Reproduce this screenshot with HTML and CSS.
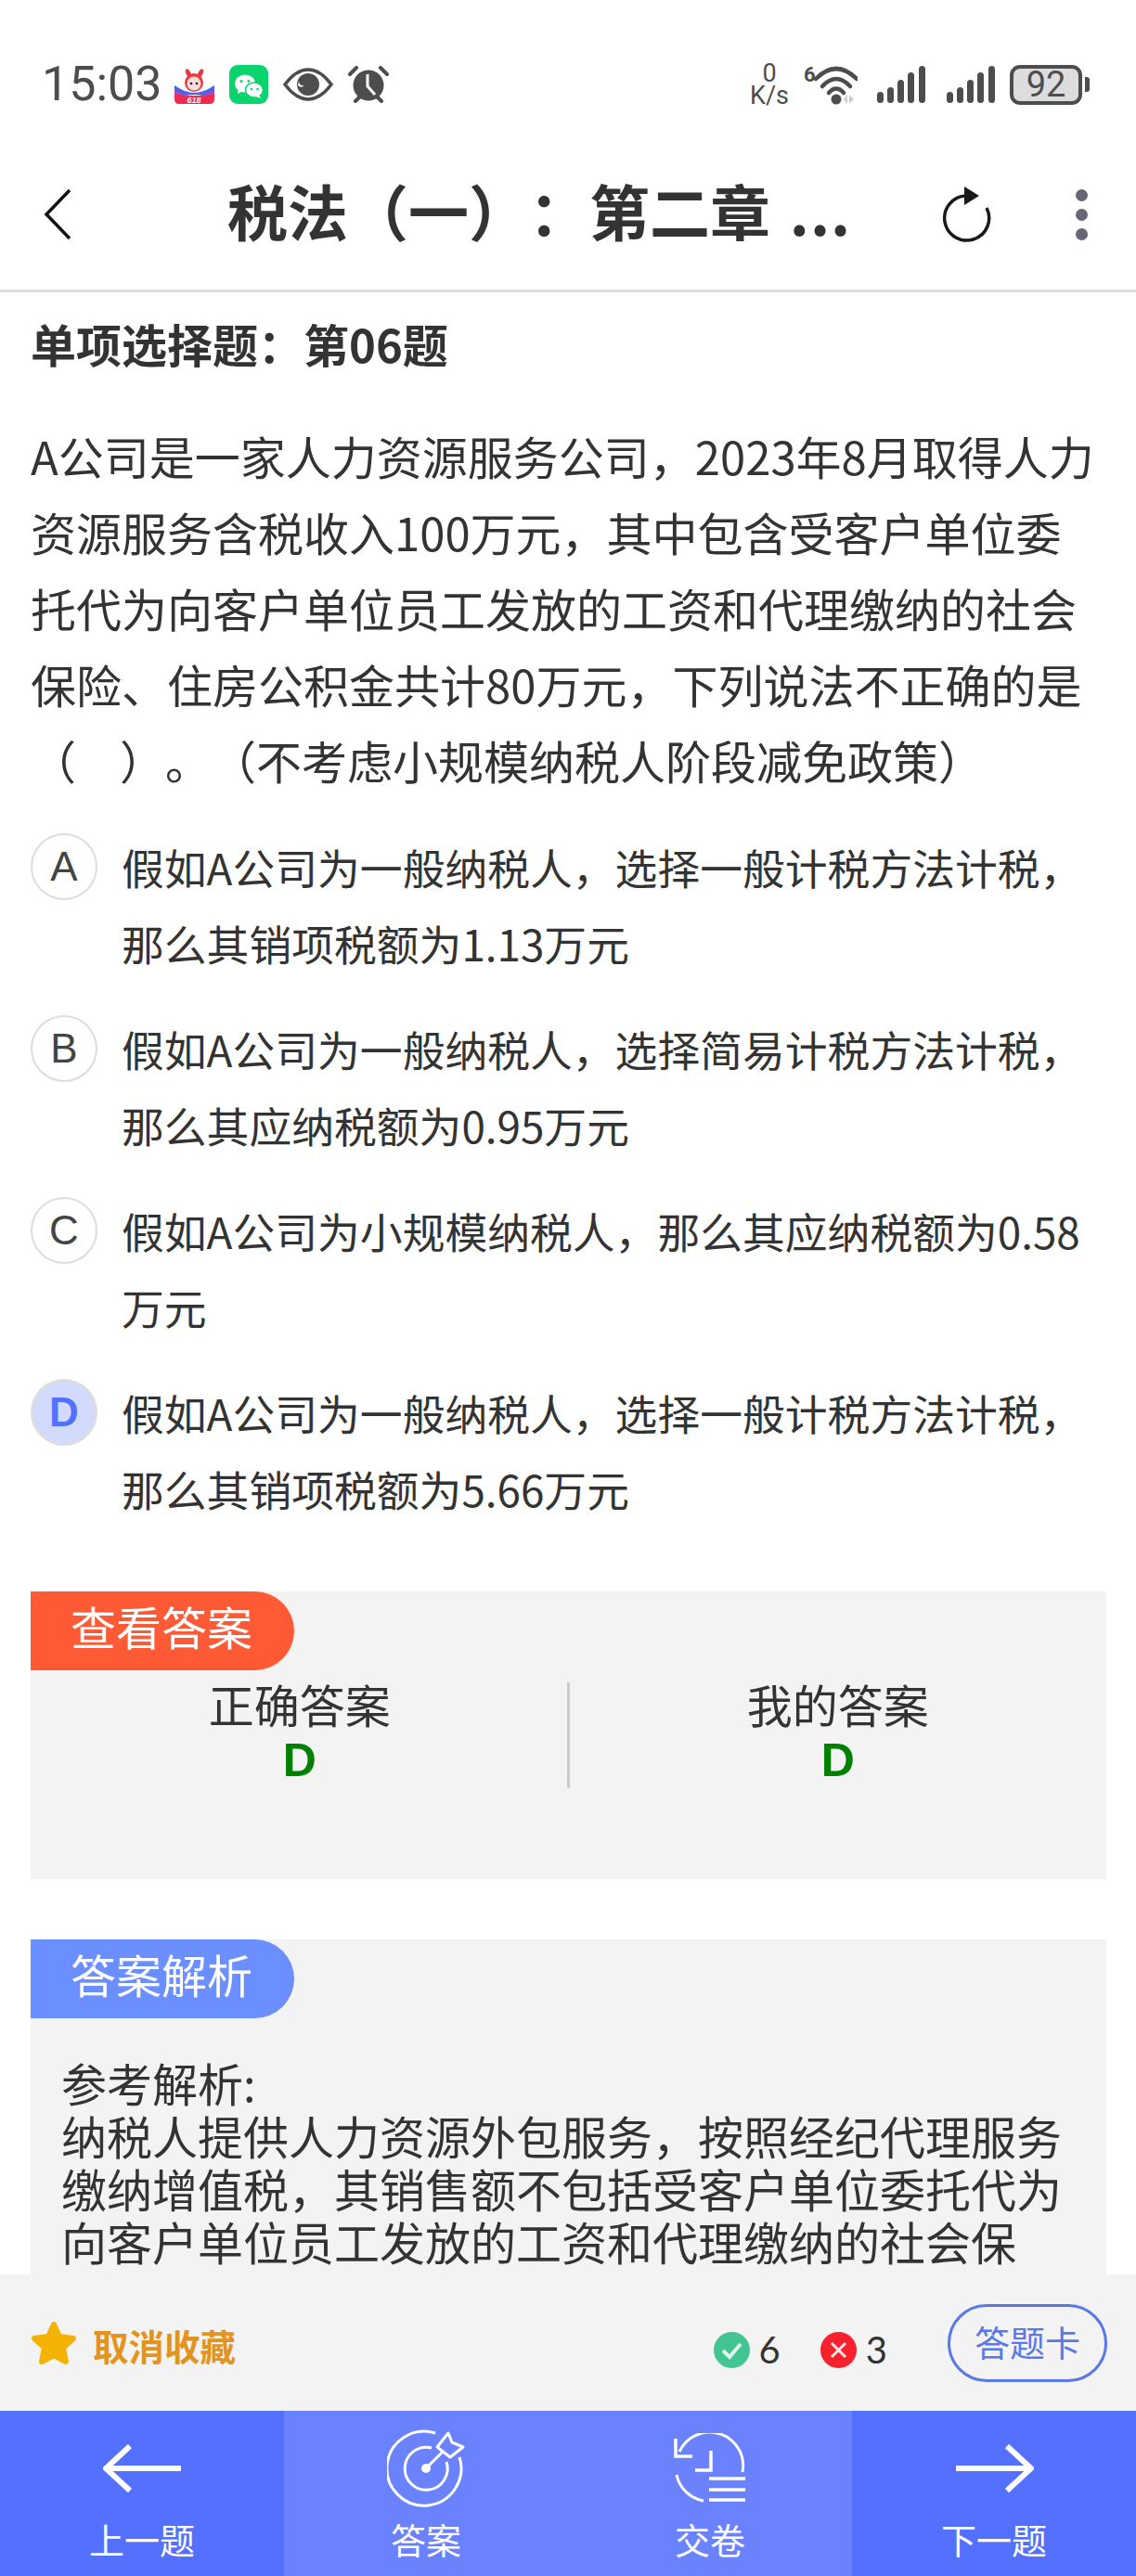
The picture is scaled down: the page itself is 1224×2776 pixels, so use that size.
FILE: index.html
```html
<!DOCTYPE html>
<html lang="zh-CN">
<head>
  <meta charset="UTF-8">
  <meta name="viewport" content="width=device-width, initial-scale=1">
  <title>税法（一）：第二章</title>
  <link rel="stylesheet" href="styles.css">
</head>
<body>
<div class="phone">
  <!-- status bar -->
  <div class="status">
    <div class="status-left">
      <span class="time">15:03</span>
      <svg class="ic-promo" viewBox="0 0 43 38">
        <path d="M0 18 Q12 26 21 26 Q31 26 43 18 V28 H0Z" fill="#4b63e0"/>
        <path d="M0 23 Q12 29 21 29 Q31 29 43 23 V30 H0Z" fill="#9a4fd0"/>
        <path d="M0 27 Q12 30 21 30 Q31 30 43 27 V33 Q43 38 38 38 H5 Q0 38 0 33Z" fill="#ee2b50"/>
        <ellipse cx="15" cy="5" rx="2.500" ry="5" fill="#e8393f" transform="rotate(-25 15 5)"/>
        <ellipse cx="28" cy="5" rx="2.500" ry="5" fill="#e8393f" transform="rotate(25 28 5)"/>
        <circle cx="21" cy="15" r="10" fill="#e8393f"/>
        <circle cx="21" cy="16" r="7.500" fill="#fbdcdc"/>
        <circle cx="18" cy="16" r="1.300" fill="#222"/>
        <circle cx="24" cy="16" r="1.300" fill="#222"/>
        <text class="promo-num" x="21" y="37" text-anchor="middle">618</text>
      </svg>
      <svg class="ic-wechat" viewBox="0 0 42 42">
        <rect width="42" height="42" rx="9" fill="#0bd46e"/>
        <ellipse cx="17" cy="20" rx="11" ry="9.500" fill="#fff"/>
        <path d="M10 26 L9 31 L15 28Z" fill="#fff"/>
        <ellipse cx="27" cy="27" rx="9.500" ry="8" fill="#fff" stroke="#0bd46e" stroke-width="1.500"/>
        <path d="M32 32 L34 36 L28 34Z" fill="#fff"/>
        <circle cx="13" cy="17.500" r="1.500" fill="#0bd46e"/>
        <circle cx="21" cy="17.500" r="1.500" fill="#0bd46e"/>
        <circle cx="24" cy="26" r="1.300" fill="#0bd46e"/>
        <circle cx="30.500" cy="26" r="1.300" fill="#0bd46e"/>
      </svg>
      <svg class="ic-eye" viewBox="0 0 54 36">
        <path d="M2 18 Q14 2 27 2 Q40 2 52 18 Q40 34 27 34 Q14 34 2 18Z" fill="none" stroke="#4d4d4d" stroke-width="3.500"/>
        <circle cx="27" cy="18" r="12" fill="#4d4d4d"/>
        <path d="M16 19 A4.500 4.500 0 0 0 23 19 A4.500 4.500 0 0 1 17 14Z" fill="#fff"/>
      </svg>
      <svg class="ic-alarm" viewBox="0 0 44 40">
        <circle cx="22" cy="21" r="16.500" fill="#4d4d4d"/>
        <path d="M21 9 V22 L29 31" fill="none" stroke="#fff" stroke-width="3"/>
        <path d="M2 9 L9 2 M35 2 L42 9" stroke="#4d4d4d" stroke-width="4" stroke-linecap="round"/>
        <path d="M8 38 L12 34 M36 38 L32 34" stroke="#4d4d4d" stroke-width="4" stroke-linecap="round"/>
      </svg>
    </div>
    <div class="status-right">
      <div class="netspeed"><span>0</span><span>K/s</span></div>
      <svg class="ic-wifi" viewBox="0 0 58 44">
        <text class="wifi-num" x="0" y="19">6</text>
        <path d="M13 16 Q35 -6 57 16" fill="none" stroke="#4d4d4d" stroke-width="4.500" stroke-linecap="round"/>
        <path d="M20 24 Q35 8 50 24" fill="none" stroke="#4d4d4d" stroke-width="4.500" stroke-linecap="round"/>
        <path d="M27 31 Q35 22 43 31" fill="none" stroke="#4d4d4d" stroke-width="4.500" stroke-linecap="round"/>
        <circle cx="35" cy="38" r="5.500" fill="#4d4d4d"/>
        <path d="M43 38 L47 33 V43Z M49 33 L54 38 L49 43Z" fill="#ccc"/>
      </svg>
      <svg class="ic-signal" viewBox="0 0 52 40">
        <rect x="0" y="28" width="7" height="12" rx="3.500"/>
        <rect x="11" y="23" width="7" height="17" rx="3.500"/>
        <rect x="22" y="15" width="7" height="25" rx="3.500"/>
        <rect x="33" y="7" width="7" height="33" rx="3.500"/>
        <rect x="45" y="0" width="7" height="40" rx="3.500"/>
      </svg>
      <svg class="ic-signal second" viewBox="0 0 52 40">
        <rect x="0" y="28" width="7" height="12" rx="3.500"/>
        <rect x="11" y="23" width="7" height="17" rx="3.500"/>
        <rect x="22" y="15" width="7" height="25" rx="3.500"/>
        <rect x="33" y="7" width="7" height="33" rx="3.500"/>
        <rect x="45" y="0" width="7" height="40" rx="3.500"/>
      </svg>
      <div class="battery"><span class="battery-body">92</span><span class="battery-tip"></span></div>
    </div>
  </div>

  <!-- title bar -->
  <header class="toolbar">
    <svg class="ic-back" viewBox="0 0 30 56"><path d="M28 2 L3 28 L28 54" fill="none" stroke="#111" stroke-width="3.500"/></svg>
    <h1 class="page-title">税法（一）：第二章 <span class="dots">...</span></h1>
    <svg class="ic-refresh" viewBox="0 0 56 60">
      <path d="M28 10 A24 24 0 1 0 50 23" fill="none" stroke="#1a1a1a" stroke-width="3.500"/>
      <path d="M26 0 L42 10 L26 20Z" fill="#1a1a1a"/>
    </svg>
    <div class="more"><i></i><i></i><i></i></div>
  </header>

  <main class="content">
    <h2 class="q-type">单项选择题：第06题</h2>
    <p class="q-text">A公司是一家人力资源服务公司，2023年8月取得人力资源服务含税收入100万元，其中包含受客户单位委托代为向客户单位员工发放的工资和代理缴纳的社会保险、住房公积金共计80万元，下列说法不正确的是（&nbsp;&nbsp;&nbsp;&nbsp;&#8202;）。（不考虑小规模纳税人阶段减免政策）</p>

    <ul class="options">
      <li class="option"><span class="letter">A</span><span class="opt-text">假如A公司为一般纳税人，选择一般计税方法计税，那么其销项税额为1.13万元</span></li>
      <li class="option"><span class="letter">B</span><span class="opt-text">假如A公司为一般纳税人，选择简易计税方法计税，那么其应纳税额为0.95万元</span></li>
      <li class="option"><span class="letter">C</span><span class="opt-text">假如A公司为小规模纳税人，那么其应纳税额为0.58万元</span></li>
      <li class="option selected"><span class="letter">D</span><span class="opt-text">假如A公司为一般纳税人，选择一般计税方法计税，那么其销项税额为5.66万元</span></li>
    </ul>

    <section class="panel answer">
      <div class="tag tag-red">查看答案</div>
      <div class="answer-cols">
        <div class="answer-col"><span>正确答案</span><b>D</b></div>
        <div class="answer-col"><span>我的答案</span><b>D</b></div>
      </div>
    </section>

    <section class="panel analysis">
      <div class="tag tag-blue">答案解析</div>
      <p class="analysis-text">参考解析:<br>纳税人提供人力资源外包服务，按照经纪代理服务<br>缴纳增值税，其销售额不包括受客户单位委托代为<br>向客户单位员工发放的工资和代理缴纳的社会保</p>
    </section>
  </main>

  <div class="actions">
    <div class="fav">
      <svg class="ic-star" viewBox="0 0 50 48"><path d="M25 4 L31 17 L46 19 L35 29 L38 44 L25 37 L12 44 L15 29 L4 19 L19 17Z" fill="#f5b301" stroke="#f5b301" stroke-width="6" stroke-linejoin="round"/></svg>
      <span>取消收藏</span>
    </div>
    <div class="score">
      <svg class="ic-mark" viewBox="0 0 39 39"><circle cx="19.500" cy="19.500" r="19.500" fill="#43c591"/><path d="M10 20 L17 27 L29 13" fill="none" stroke="#dff7ec" stroke-width="4"/></svg>
      <span>6</span>
      <svg class="ic-mark wrong" viewBox="0 0 39 39"><circle cx="19.500" cy="19.500" r="19.500" fill="#f5222d"/><path d="M12 12 L27 27 M27 12 L12 27" stroke="#fde3e3" stroke-width="3"/></svg>
      <span>3</span>
    </div>
    <div class="card-btn">答题卡</div>
  </div>

  <nav class="tabs">
    <div class="tab">
      <span class="tab-icon"><svg class="ic-arrow" viewBox="0 0 85 52"><path d="M84 26 H3 M29 2 L3 26 L29 50" fill="none" stroke="#fff" stroke-width="6"/></svg></span>
      <span class="tab-label">上一题</span>
    </div>
    <div class="tab light">
      <span class="tab-icon"><svg class="ic-target" viewBox="0 0 84 84">
        <path d="M52 4 A40 40 0 1 0 78 30" fill="none" stroke="#fff" stroke-width="3"/>
        <path d="M48 20 A23 23 0 1 0 64 35" fill="none" stroke="#fff" stroke-width="3"/>
        <circle cx="42" cy="42" r="5" fill="#fff"/>
        <path d="M42 42 L60 24" stroke="#fff" stroke-width="3"/>
        <path d="M66 4 L70 14 L82 19 L68 30 L54 19Z" fill="none" stroke="#fff" stroke-width="3" stroke-linejoin="round"/>
      </svg></span>
      <span class="tab-label">答案</span>
    </div>
    <div class="tab light">
      <span class="tab-icon"><svg class="ic-submit" viewBox="0 0 78 76">
        <path d="M6 20 A36 36 0 0 1 74 42" fill="none" stroke="#fff" stroke-width="3"/>
        <path d="M2 6 V25 H20" fill="none" stroke="#fff" stroke-width="3.500"/>
        <path d="M40 19 V40 H23" fill="none" stroke="#fff" stroke-width="3.500"/>
        <path d="M3 45 A36 36 0 0 0 32 73" fill="none" stroke="#fff" stroke-width="3"/>
        <path d="M38 49 H77 M38 61 H77 M38 72 H77" stroke="#fff" stroke-width="3.500"/>
      </svg></span>
      <span class="tab-label">交卷</span>
    </div>
    <div class="tab">
      <span class="tab-icon"><svg class="ic-arrow" viewBox="0 0 85 52"><path d="M1 26 H82 M56 2 L82 26 L56 50" fill="none" stroke="#fff" stroke-width="6"/></svg></span>
      <span class="tab-label">下一题</span>
    </div>
  </nav>
</div>
</body>
</html>
```

FILE: styles.css
```css
:root {
  --text: #333;
  --status: #4d4d4d;
  --panel: #f3f3f3;
  --blue: #5470ff;
  --blue-light: #6b82ff;
  --line: #ddd;
}
* { box-sizing: border-box; margin: 0; padding: 0; }
html, body { height: 100%; }
body {
  font-family: "Noto Sans CJK SC", "Noto Sans", sans-serif;
  color: var(--text);
  background: #fff;
  overflow: hidden;
  text-spacing-trim: space-all;
}
.phone { display: flex; flex-direction: column; height: 100vh; }

/* status bar */
.status {
  height: 150px;
  padding: 32px 50px 0 45px;
  display: flex;
  align-items: center;
  justify-content: space-between;
  flex: none;
  color: var(--status);
}
.status-left, .status-right { display: flex; align-items: center; }
.status-left { gap: 16px; }
.time { font-family: Roboto, sans-serif; font-size: 52px; line-height: 60px; margin-right: -3px; }
.ic-promo { width: 43px; height: 38px; margin-top: 3px; }
.promo-num { font: italic 700 9px "Liberation Sans", sans-serif; fill: #fff; }
.ic-wechat { width: 42px; height: 42px; }
.ic-eye { width: 54px; height: 36px; }
.ic-alarm { width: 44px; height: 40px; }
.netspeed {
  display: flex;
  flex-direction: column;
  align-items: center;
  font-family: Roboto, sans-serif;
  font-size: 27px;
  line-height: 24px;
  width: 42px;
}
.ic-wifi { width: 58px; height: 44px; margin-left: 16px; }
.wifi-num { font: 700 22px Roboto, sans-serif; fill: var(--status); }
.ic-signal { width: 52px; height: 40px; margin-left: 21px; fill: var(--status); }
.ic-signal.second { margin-left: 23px; }
.battery { display: flex; align-items: center; margin-left: 16px; }
.battery-body {
  width: 78px;
  height: 43px;
  border: 4px solid var(--status);
  border-radius: 11px;
  background: #ddd;
  font-family: Roboto, sans-serif;
  font-size: 38px;
  line-height: 35px;
  text-align: center;
}
.battery-tip { width: 5px; height: 16px; margin-left: 3px; background: var(--status); border-radius: 0 3px 3px 0; }

/* title bar */
.toolbar {
  height: 165px;
  flex: none;
  display: flex;
  align-items: center;
  padding-left: 47px;
  border-bottom: 3px solid var(--line);
}
.ic-back { width: 30px; height: 56px; }
.page-title {
  margin-left: 168px;
  font-size: 65px;
  line-height: 80px;
  font-weight: 700;
  white-space: nowrap;
  margin-top: -10px;
}
.dots { margin-left: 6px; letter-spacing: 1px; }
.ic-refresh { width: 56px; height: 60px; margin-left: auto; }
.more { display: flex; flex-direction: column; gap: 8px; margin: 0 52px 0 90px; }
.more i { width: 13px; height: 13px; border-radius: 50%; background: #666677; }

/* scrolling area */
.content { flex: 1; min-height: 0; overflow: hidden; padding: 25px 32px 0 33px; }
.q-type { font-size: 49px; line-height: 60px; font-weight: 700; }
.q-text { margin-top: 50px; font-size: 49px; line-height: 82px; }
.options { list-style: none; margin-top: 33px; }
.option { display: flex; gap: 26px; margin-bottom: 32px; }
.letter {
  flex: none;
  width: 72px;
  height: 72px;
  margin-top: 5px;
  border: 2px solid var(--line);
  border-radius: 50%;
  font-family: "Liberation Sans", sans-serif;
  font-size: 44px;
  line-height: 68px;
  text-align: center;
  color: #444;
}
.opt-text { font-size: 45.8px; line-height: 82px; }
.selected .letter {
  background: #d2dbff;
  border: 3px solid #ddd;
  color: var(--blue);
  font-weight: 700;
  line-height: 66px;
}

.panel { background: var(--panel); }
.answer { height: 310px; margin-top: 70px; }
.analysis { margin-top: 65px; padding-bottom: 40px; }
.tag {
  width: 284px;
  height: 85px;
  padding-left: 43px;
  border-radius: 0 43px 43px 0;
  color: #fff;
  font-size: 49px;
  line-height: 73px;
}
.tag-red { background: #ff5a36; }
.tag-blue { background: #6c8fff; }
.answer-cols { display: grid; grid-template-columns: 1fr 1fr; margin-top: 13px; height: 114px; }
.answer-col { display: flex; flex-direction: column; align-items: center; }
.answer-col + .answer-col { border-left: 3px solid #ccc; margin-left: -2px; }
.answer-col span { font-size: 49px; line-height: 55px; margin-top: -5px; }
.answer-col b {
  font-family: "Liberation Sans", sans-serif;
  font-size: 50px;
  line-height: 59px;
  margin-top: 5px;
  color: #008000;
}
.analysis-text { margin-top: 40px; padding: 0 33px; font-size: 49px; line-height: 57px; white-space: nowrap; }

/* favourite / score row */
.actions {
  height: 147px;
  flex: none;
  display: flex;
  align-items: center;
  padding: 0 31px 0 33px;
  background: var(--panel);
}
.fav { display: flex; align-items: center; gap: 17px; }
.ic-star { width: 50px; height: 48px; }
.fav span { font-size: 38.5px; line-height: 48px; font-weight: 700; color: #e39321; margin-top: 4px; }
.score { display: flex; align-items: center; gap: 10px; margin: 15px 0 0 auto; }
.score span { font-family: Lato, sans-serif; font-size: 40px; line-height: 48px; color: #333; }
.ic-mark { width: 39px; height: 39px; }
.ic-mark.wrong { margin-left: 33px; }
.card-btn {
  width: 172px;
  height: 84px;
  margin-left: 65px;
  border: 3px solid #5a78e6;
  border-radius: 42px;
  color: #5a78e6;
  font-size: 38px;
  line-height: 74px;
  text-align: center;
}

/* bottom tabs */
.tabs { height: 178px; flex: none; display: grid; grid-template-columns: repeat(4, 1fr); background: var(--blue); }
.tab { display: flex; flex-direction: column; align-items: center; padding-top: 20px; color: #fff; }
.tab.light { background: var(--blue-light); }
.tab-icon { height: 84px; display: flex; align-items: center; }
.tab-label { margin-top: 9px; font-size: 38px; line-height: 50px; }
.ic-arrow { width: 85px; height: 52px; }
.ic-target { width: 84px; height: 84px; }
.ic-submit { width: 78px; height: 76px; }
```
